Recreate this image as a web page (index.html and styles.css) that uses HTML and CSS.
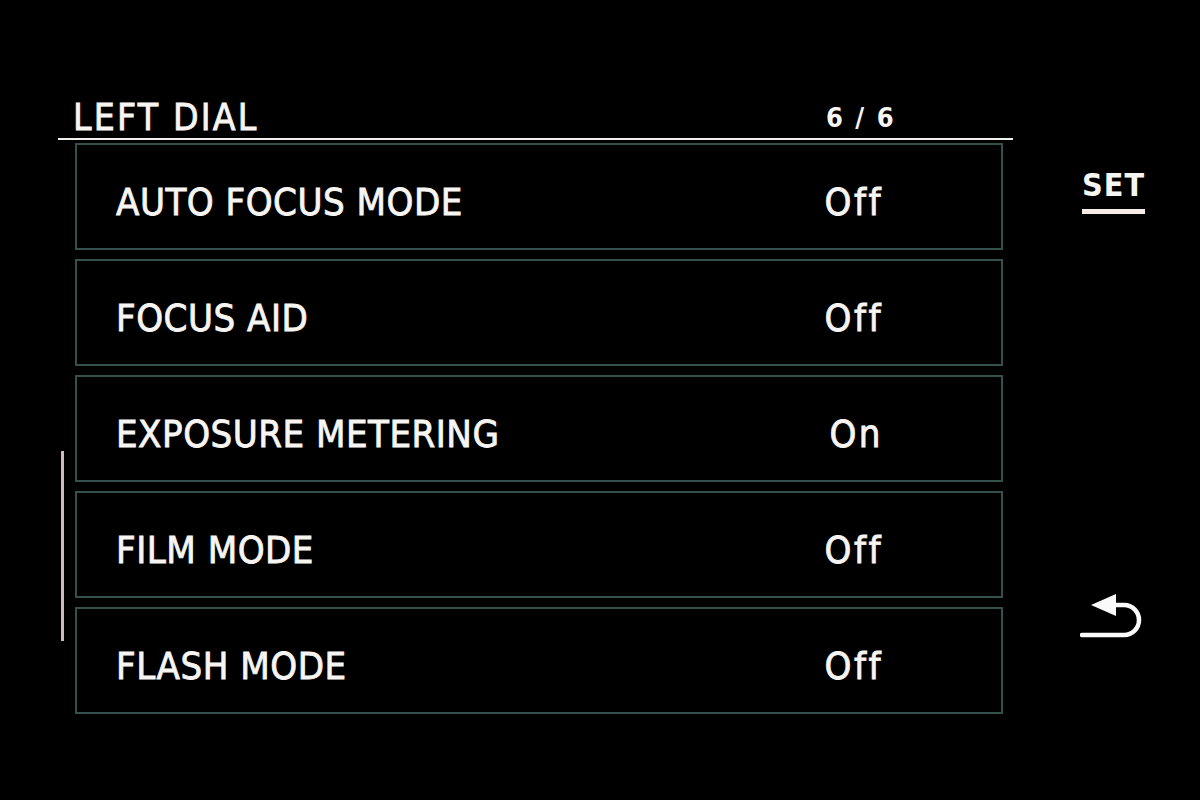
FILE: index.html
```html
<!DOCTYPE html>
<html>
<head>
<meta charset="utf-8">
<link rel="stylesheet" href="styles.css">
</head>
<body>
<div class="screen">
  <div class="main">
    <div class="header">
      <span class="title">LEFT DIAL</span>
      <span class="page">6 / 6</span>
    </div>
    <div class="body">
      <div class="scroll"><div class="thumb"></div></div>
      <div class="list">
        <div class="row"><span class="label">AUTO FOCUS MODE</span><span class="value">Off</span></div>
        <div class="row"><span class="label">FOCUS AID</span><span class="value">Off</span></div>
        <div class="row"><span class="label">EXPOSURE METERING</span><span class="value">On</span></div>
        <div class="row"><span class="label">FILM MODE</span><span class="value">Off</span></div>
        <div class="row"><span class="label">FLASH MODE</span><span class="value">Off</span></div>
      </div>
    </div>
  </div>
  <div class="side">
    <div class="set">SET</div>
    <svg class="back" width="62" height="50" viewBox="0 0 62 50">
      <polygon points="11,13 36,2 36,24" fill="#fafafa"/>
      <path d="M33 13 H44 A15 15 0 0 1 44 43 H2" fill="none" stroke="#fafafa" stroke-width="4.5" stroke-linecap="round"/>
    </svg>
  </div>
</div>
</body>
</html>
```
FILE: styles.css
```css
html, body {
  margin: 0;
  padding: 0;
  background: #000;
}
body {
  width: 1200px;
  height: 800px;
  overflow: hidden;
  color: #f7f5f2;
  font-family: "DejaVu Sans", "Liberation Sans", sans-serif;
  font-stretch: condensed;
  -webkit-text-stroke: 0.8px #f7f5f2;
}
.screen {
  display: flex;
  padding-top: 91px;
  padding-left: 58px;
}
.main {
  width: 955px;
}
.header {
  display: flex;
  align-items: flex-end;
  height: 47px;
  border-bottom: 2px solid #f2f0ec;
  padding-left: 15px;
}
.title {
  font-size: 37px;
  line-height: 40px;
  width: 753px;
  letter-spacing: 2.2px;
}
.page {
  font-size: 27px;
  line-height: 40px;
  font-weight: bold;
  letter-spacing: 2px;
  -webkit-text-stroke: 0;
}
.body {
  display: flex;
  margin-top: 3px;
}
.scroll {
  width: 17px;
  padding-left: 3px;
  box-sizing: border-box;
}
.thumb {
  width: 3px;
  height: 190px;
  margin-top: 308px;
  background: #c9bdbd;
}
.list {
  display: flex;
  flex-direction: column;
  gap: 9px;
  width: 928px;
}
.row {
  height: 107px;
  box-sizing: border-box;
  border: 2px solid #34504b;
  display: flex;
  align-items: center;
  justify-content: space-between;
  padding: 10px 118px 0 39px;
}
.label {
  font-size: 38px;
  letter-spacing: 0.5px;
}
.value {
  font-size: 38px;
  letter-spacing: 2.5px;
}
.side {
  display: flex;
  flex-direction: column;
  align-items: flex-start;
  padding-left: 69px;
}
.set {
  margin-top: 76px;
  font-size: 32px;
  line-height: 36px;
  font-weight: bold;
  letter-spacing: 1px;
  padding-bottom: 6px;
  border-bottom: 5px solid #f7ece6;
  -webkit-text-stroke: 0;
}
.back {
  margin-top: 378px;
  margin-left: -2px;
}
```
